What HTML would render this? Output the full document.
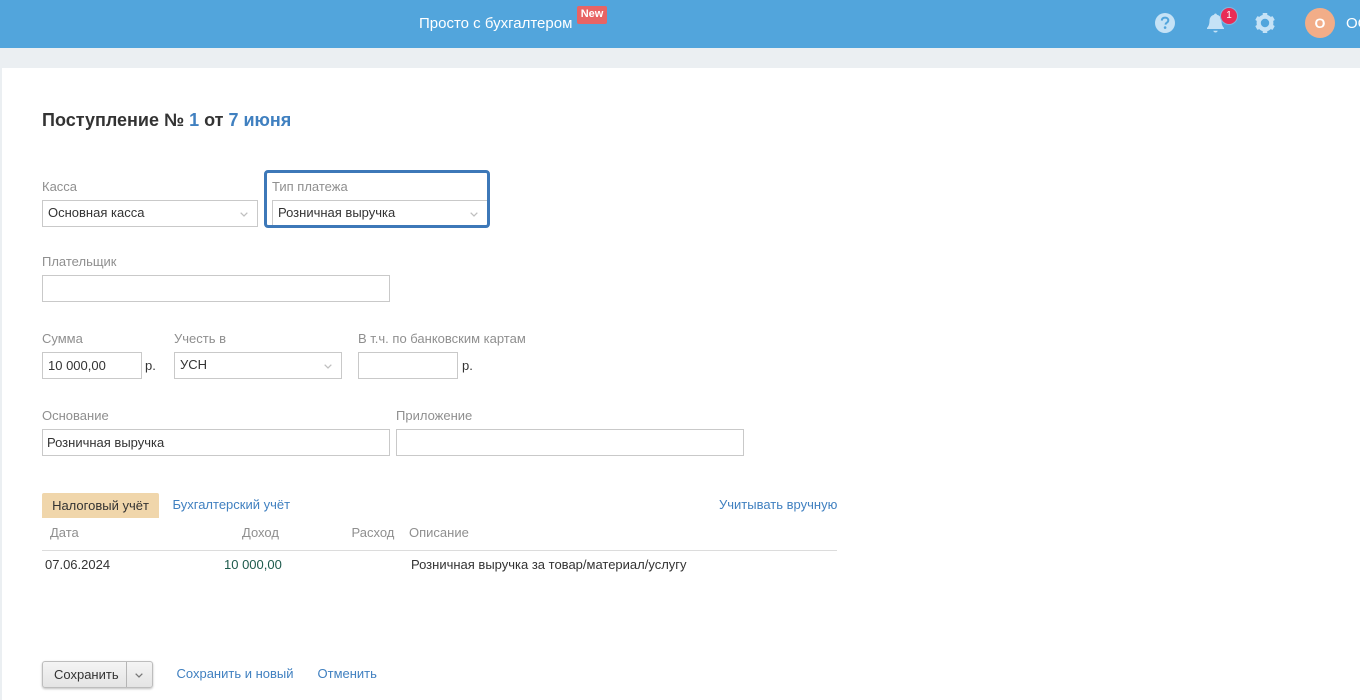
<!DOCTYPE html>
<html lang="ru">
<head>
<meta charset="utf-8">
<title>Поступление</title>
<style>
html,body{margin:0;padding:0;width:1360px;height:700px;overflow:hidden;background:#fff}
body{position:relative;font-family:"Liberation Sans",Arial,sans-serif;font-size:13px;color:#333}
.a{position:absolute;white-space:nowrap}
.t{position:absolute;white-space:nowrap;line-height:16px}
.l{color:#8f8f8f}
.b{color:#4080c0}
.f{position:absolute;box-sizing:border-box;background:#fff;border:1px solid #c9c9c9}
svg{position:absolute;overflow:visible}
</style>
</head>
<body>
<div class="a" style="left:0;top:0;width:1360px;height:48px;background:#52a5dc"></div>
<div class="a" style="left:0;top:48px;width:1360px;height:20px;background:#ebeff2"></div>
<div class="a" style="left:0;top:68px;width:2px;height:632px;background:#ebeff2"></div>

<div class="t" style="left:419px;top:16px;font-size:15px;color:#fff">Просто с бухгалтером</div>
<div class="a" style="left:577px;top:6px;width:30px;height:18px;border-radius:2px;background:#e86464;color:#fff;font-size:11px;font-weight:bold;line-height:17px;text-align:center">New</div>

<svg style="left:1155px;top:13px" width="20" height="20" viewBox="0 0 20 20"><circle cx="10" cy="10" r="10" fill="#c5e2f6"/><path d="M6.800 7.600C6.900 5.600 8.200 4.600 10.100 4.600c1.900 0 3.200 1.100 3.200 2.700 0 1.300-.7 1.900-1.600 2.500-.8.500-1.100.9-1.100 1.800" fill="none" stroke="#52a5dc" stroke-width="2"/><circle cx="10.100" cy="14.600" r="1.300" fill="#52a5dc"/></svg>
<svg style="left:1206px;top:13px" width="20" height="20" viewBox="0 0 20 20"><path d="M9.500 0.500c.8 0 1.300.5 1.400 1.200 2.900.7 4.500 3 4.600 6 .1 3.400.7 5.200 2.500 7.300v1H1v-1c1.800-2.100 2.400-3.900 2.500-7.300.1-3 1.700-5.300 4.600-6 .1-.7.6-1.200 1.400-1.200z" fill="#c5e2f6"/><path d="M7.300 17.800h4.400c-.2 1-1.100 1.700-2.200 1.700s-2-.7-2.200-1.700z" fill="#c5e2f6"/></svg>
<div class="a" style="left:1220px;top:7px;width:18px;height:18px;border-radius:50%;background:#7fb8df"></div>
<div class="a" style="left:1221px;top:8px;width:16px;height:16px;border-radius:50%;background:#e92c55;color:#fff;font-size:10px;line-height:16px;text-align:center">1</div>
<svg style="left:1255px;top:13px" width="20" height="20" viewBox="0 0 20 20"><circle cx="10" cy="10" r="6.300" fill="none" stroke="#c5e2f6" stroke-width="4.200"/><g fill="#c5e2f6"><rect x="7.700" y="0" width="4.600" height="4" rx=".6"/><rect x="7.700" y="16" width="4.600" height="4" rx=".6"/><rect x="7.700" y="0" width="4.600" height="4" rx=".6" transform="rotate(60 10 10)"/><rect x="7.700" y="0" width="4.600" height="4" rx=".6" transform="rotate(120 10 10)"/><rect x="7.700" y="0" width="4.600" height="4" rx=".6" transform="rotate(240 10 10)"/><rect x="7.700" y="0" width="4.600" height="4" rx=".6" transform="rotate(300 10 10)"/></g></svg>
<div class="a" style="left:1305px;top:8px;width:30px;height:30px;border-radius:50%;background:#f2ad88;color:#fff;font-size:14px;font-weight:bold;line-height:30px;text-align:center">О</div>
<div class="t" style="left:1346px;top:16px;font-size:15px;color:#fff">ОС</div>

<div class="t" style="left:42px;top:110px;font-size:18px;line-height:20px;font-weight:bold;color:#333">Поступление № <span class="b">1</span> от <span class="b">7 июня</span></div>

<div class="t l" style="left:42px;top:179px">Касса</div>
<div class="f" style="left:42px;top:200px;width:216px;height:27px"></div>
<div class="t" style="left:48px;top:205px">Основная касса</div>
<svg style="left:240px;top:212px" width="8" height="5" viewBox="0 0 9 6"><path d="M.5.800 4.500 4.800 8.500.800" fill="none" stroke="#c0c0c0" stroke-width="1.500"/></svg>

<div class="f" style="left:272px;top:200px;width:216px;height:27px;border-right:0"></div>
<div class="t" style="left:278px;top:205px">Розничная выручка</div>
<svg style="left:470px;top:212px" width="8" height="5" viewBox="0 0 9 6"><path d="M.5.800 4.500 4.800 8.500.800" fill="none" stroke="#c0c0c0" stroke-width="1.500"/></svg>
<div class="a" style="left:264px;top:170px;width:226px;height:58px;box-sizing:border-box;border:3px solid #3d78b8;border-radius:4px"></div>
<div class="t l" style="left:272px;top:179px">Тип платежа</div>

<div class="t l" style="left:42px;top:254px">Плательщик</div>
<div class="f" style="left:42px;top:275px;width:348px;height:27px"></div>

<div class="t l" style="left:42px;top:331px">Сумма</div>
<div class="f" style="left:42px;top:352px;width:100px;height:27px"></div>
<div class="t" style="left:48px;top:358px">10 000,00</div>
<div class="t" style="left:145px;top:358px">р.</div>

<div class="t l" style="left:174px;top:331px">Учесть в</div>
<div class="f" style="left:174px;top:352px;width:168px;height:27px"></div>
<div class="t" style="left:180px;top:357px">УСН</div>
<svg style="left:324px;top:364px" width="8" height="5" viewBox="0 0 9 6"><path d="M.5.800 4.500 4.800 8.500.800" fill="none" stroke="#c0c0c0" stroke-width="1.500"/></svg>

<div class="t l" style="left:358px;top:331px">В т.ч. по банковским картам</div>
<div class="f" style="left:358px;top:352px;width:100px;height:27px"></div>
<div class="t" style="left:462px;top:358px">р.</div>

<div class="t l" style="left:42px;top:408px">Основание</div>
<div class="f" style="left:42px;top:429px;width:348px;height:27px"></div>
<div class="t" style="left:47px;top:435px">Розничная выручка</div>

<div class="t l" style="left:396px;top:408px">Приложение</div>
<div class="f" style="left:396px;top:429px;width:348px;height:27px"></div>

<div class="a" style="left:42px;top:493px;width:117px;height:25px;background:#f0d6ab;border-radius:2px 2px 0 0;line-height:25px;text-align:center;color:#333">Налоговый учёт</div>
<div class="t b" style="left:172.500px;top:497px">Бухгалтерский учёт</div>
<div class="t b" style="left:719px;top:497px">Учитывать вручную</div>

<div class="t l" style="left:50px;top:525px">Дата</div>
<div class="t l" style="left:242px;top:525px">Доход</div>
<div class="t l" style="left:351.500px;top:525px">Расход</div>
<div class="t l" style="left:409px;top:525px">Описание</div>
<div class="a" style="left:42px;top:550px;width:795px;height:1px;background:#dcdcdc"></div>

<div class="t" style="left:45px;top:557px">07.06.2024</div>
<div class="t" style="left:224px;top:557px;color:#1d5a4c">10 000,00</div>
<div class="t" style="left:411px;top:557px">Розничная выручка за товар/материал/услугу</div>

<div class="a" style="left:42px;top:661px;width:111px;height:27px;box-sizing:border-box;border:1px solid #bdbdbd;border-radius:3px;background:linear-gradient(#f4f4f4,#e4e4e4);box-shadow:0 1px 2px rgba(0,0,0,.25)"></div>
<div class="a" style="left:126px;top:662px;width:1px;height:25px;background:#b5b5b5"></div>
<div class="t" style="left:54px;top:667px">Сохранить</div>
<svg style="left:134.500px;top:673px" width="8" height="5" viewBox="0 0 9 6"><path d="M.5.800 4.500 4.800 8.500.800" fill="none" stroke="#777" stroke-width="1.500"/></svg>
<div class="t b" style="left:176.500px;top:666px">Сохранить и новый</div>
<div class="t b" style="left:317.500px;top:666px">Отменить</div>
</body>
</html>
